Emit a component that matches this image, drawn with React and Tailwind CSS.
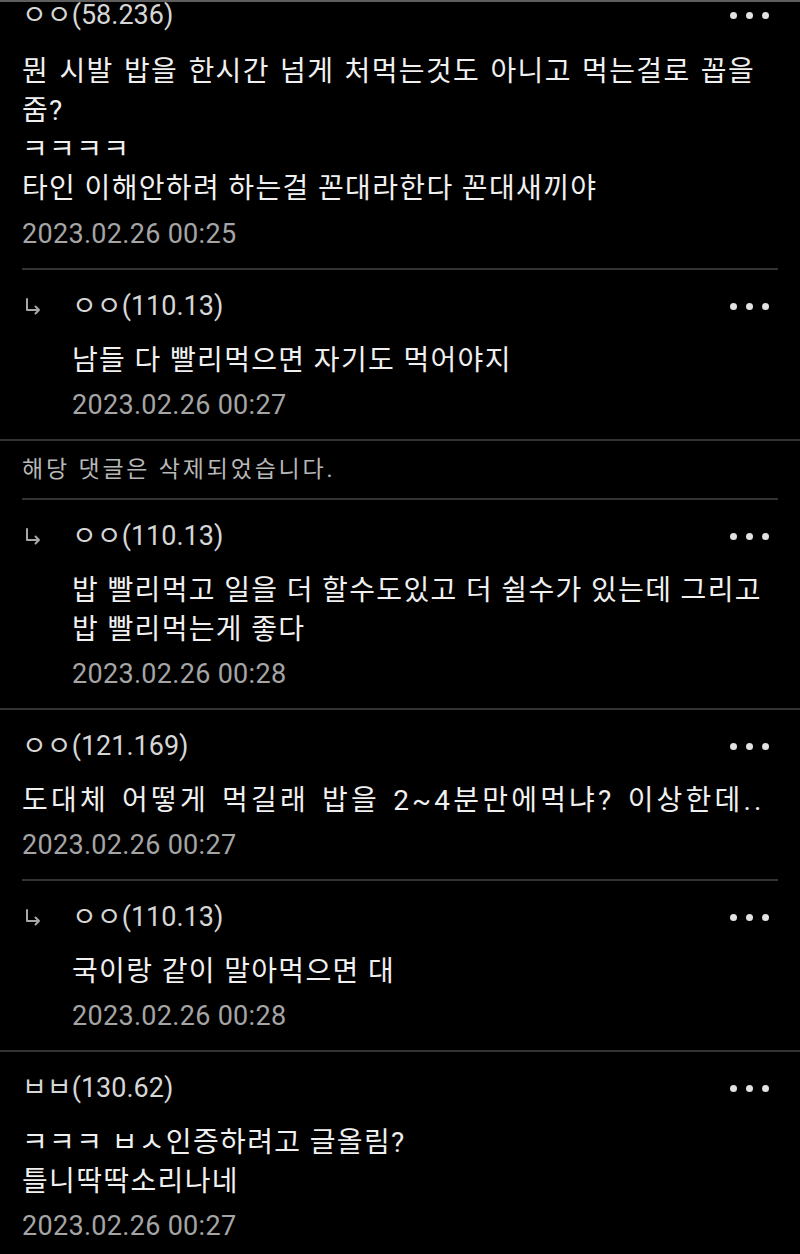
import React from "react";

const FONT = { fontFamily: "Roboto, 'Noto Sans CJK KR', sans-serif" };

const items = [
  {
    type: "comment",
    first: true,
    name: "ㅇㅇ(58.236)",
    lines: [
      { t: "뭔 시발 밥을 한시간 넘게 처먹는것도 아니고 먹는걸로 꼽을", c: "[word-spacing:2px]" },
      { t: "줌?" },
      { t: "ㅋㅋㅋㅋ" },
      { t: "타인 이해안하려 하는걸 꼰대라한다 꼰대새끼야" },
    ],
    date: "2023.02.26 00:25",
  },
  { type: "divider", inset: true },
  {
    type: "reply",
    name: "ㅇㅇ(110.13)",
    lines: [{ t: "남들 다 빨리먹으면 자기도 먹어야지" }],
    date: "2023.02.26 00:27",
  },
  { type: "divider", inset: false },
  { type: "deleted" },
  { type: "divider", inset: true },
  {
    type: "reply",
    name: "ㅇㅇ(110.13)",
    lines: [
      { t: "밥 빨리먹고 일을 더 할수도있고 더 쉴수가 있는데 그리고" },
      { t: "밥 빨리먹는게 좋다" },
    ],
    date: "2023.02.26 00:28",
  },
  { type: "divider", inset: false },
  {
    type: "comment",
    name: "ㅇㅇ(121.169)",
    lines: [
      { t: "도대체 어떻게 먹길래 밥을 2~4분만에먹냐? 이상한데..", c: "[word-spacing:3px] !tracking-[3.2px]" },
    ],
    date: "2023.02.26 00:27",
  },
  { type: "divider", inset: true },
  {
    type: "reply",
    name: "ㅇㅇ(110.13)",
    lines: [{ t: "국이랑 같이 말아먹으면 대" }],
    date: "2023.02.26 00:28",
  },
  { type: "divider", inset: false },
  {
    type: "comment",
    name: "ㅂㅂ(130.62)",
    lines: [{ t: "ㅋㅋㅋ ㅂㅅ인증하려고 글올림?" }, { t: "틀니딱딱소리나네" }],
    date: "2023.02.26 00:27",
  },
];

function Dots() {
  return (
    <div className="flex items-center gap-[9px]">
      <span className="w-[7px] h-[7px] rounded-full bg-[#e2e2e2]" />
      <span className="w-[7px] h-[7px] rounded-full bg-[#e2e2e2]" />
      <span className="w-[7px] h-[7px] rounded-full bg-[#e2e2e2]" />
    </div>
  );
}

function ReplyArrow() {
  return (
    <svg width="18" height="18" viewBox="0 0 18 18" className="text-[#a8a8a8]">
      <path
        d="M3 2 V13 H15 M11.5 9.5 L15 13 L11.5 16.5"
        fill="none"
        stroke="currentColor"
        strokeWidth="2"
        strokeLinecap="round"
        strokeLinejoin="round"
      />
    </svg>
  );
}

function Comment({ item }) {
  const reply = item.type === "reply";
  return (
    <div className={item.first ? "pb-[19px]" : "pt-[21px] pb-[19px]"}>
      <div
        className={
          "flex items-center justify-between pr-[31px] " +
          (item.first ? "h-[26px]" : "h-[30px]")
        }
      >
        <div className="flex items-center">
          {reply && (
            <div className="w-[50px] pl-[24px] flex items-center">
              <ReplyArrow />
            </div>
          )}
          <span className="text-[27px] text-[#d6d6d6] leading-[30px] pl-[22px] whitespace-nowrap">
            {item.name}
          </span>
        </div>
        <Dots />
      </div>
      <div
        className={
          (reply ? "pl-[72px] " : "pl-[22px] ") +
          (item.first ? "mt-[24px]" : "mt-[20px]")
        }
      >
        {item.lines.map((l, i) => (
          <div
            key={i}
            className={
              "text-[28px] leading-[39px] tracking-[1.35px] text-[#f0f0f0] whitespace-nowrap " +
              (l.c || "")
            }
          >
            {l.t}
          </div>
        ))}
        <div
          className={
            "text-[27px] leading-[30px] tracking-[0.3px] text-[#a5a5a5] " +
            (item.first ? "mt-[11px]" : "mt-[10px]")
          }
        >
          {item.date}
        </div>
      </div>
    </div>
  );
}

export default function App() {
  return (
    <div className="w-[800px] h-[1254px] bg-black overflow-hidden" style={FONT}>
      <div className="h-[2px] bg-[#5e5e5e]" />
      {items.map((item, i) => {
        if (item.type === "divider") {
          return (
            <div key={i} className={item.inset ? "px-[22px]" : ""}>
              <div className="h-[2px] bg-[#333333]" />
            </div>
          );
        }
        if (item.type === "deleted") {
          return (
            <div
              key={i}
              className="pt-[16px] pb-[15px] pl-[22px] text-[23px] leading-[26px] text-[#b8b8b8] tracking-[2.8px] whitespace-nowrap"
            >
              해당 댓글은 삭제되었습니다.
            </div>
          );
        }
        return <Comment key={i} item={item} />;
      })}
    </div>
  );
}
